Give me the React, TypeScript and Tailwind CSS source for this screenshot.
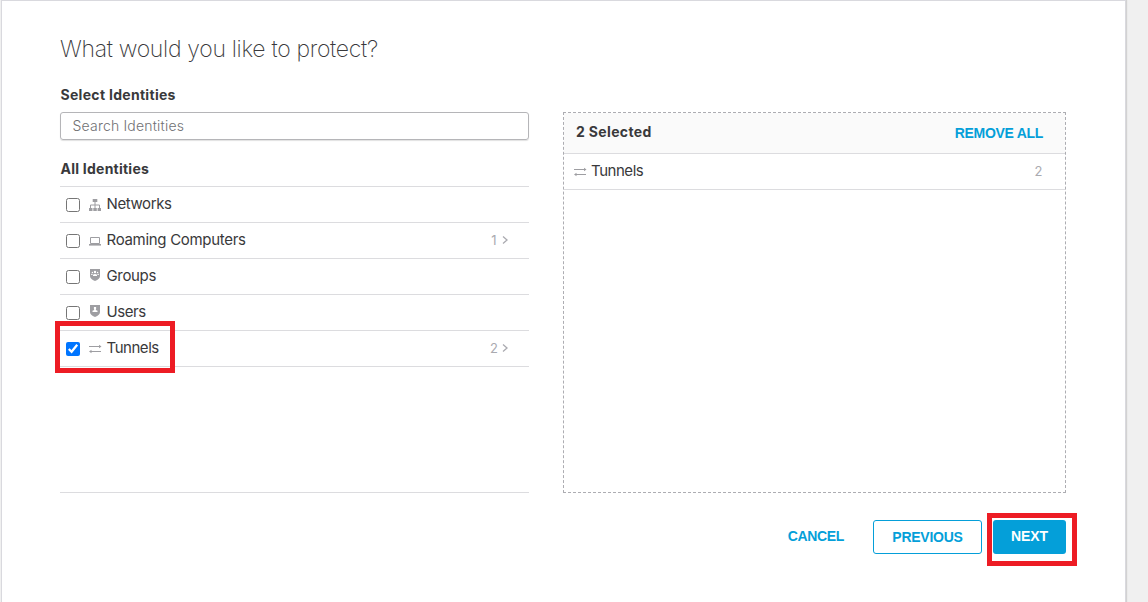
import { useState } from "react";

type IconName = "network" | "laptop" | "group" | "user" | "tunnel";

function Icon({ name }: { name: IconName }) {
  const common = {
    width: 14,
    height: 14,
    viewBox: "0 0 14 14",
    fill: "#9e9ea2",
    className: "block shrink-0",
  };
  switch (name) {
    case "network":
      return (
        <svg {...common}>
          <path d="M4.700 1h4.600v3H4.700zM1 10h3.500v3H1zM5.300 10h3.500v3H5.300zM9.600 10H13v3H9.600z" />
          <path d="M7 4v6M2.500 10V7h9v3" fill="none" stroke="#9e9ea2" />
        </svg>
      );
    case "laptop":
      return (
        <svg {...common}>
          <path d="M2.500 3.500h9v6h-9z" fill="none" stroke="#9e9ea2" />
          <path d="M1 10h12v1.600H1z" />
        </svg>
      );
    case "group":
      return (
        <svg {...common}>
          <path d="M2 1h10v7q0 3.200-5 5-5-1.800-5-5z" />
          <g fill="#fff">
            <circle cx="7" cy="4" r="1.200" />
            <path d="M5 8V6.700q2-1.400 4 0V8z" />
            <circle cx="4.400" cy="4.500" r=".7" />
            <circle cx="9.600" cy="4.500" r=".7" />
            <path d="M3.200 7V6q.7-.7 1.300 0v1zM9.500 7V6q.7-.7 1.300 0v1z" />
          </g>
        </svg>
      );
    case "user":
      return (
        <svg {...common}>
          <path d="M2 1h10v7q0 3.200-5 5-5-1.800-5-5z" />
          <path d="M5.900 3h2.200v2L7.700 6l1.800.7V8h-5V6.700L6.300 6l-.4-1z" fill="#fff" />
        </svg>
      );
    case "tunnel":
      return (
        <svg {...common}>
          <path d="M1 4h10V2.800L13.500 4.500 11 6.200V5H1zM13 9H3.500V7.800L1 9.500l2.500 1.700V10H13z" />
        </svg>
      );
  }
}

const identities: { label: string; icon: IconName; count?: number }[] = [
  { label: "Networks", icon: "network" },
  { label: "Roaming Computers", icon: "laptop", count: 1 },
  { label: "Groups", icon: "group" },
  { label: "Users", icon: "user" },
  { label: "Tunnels", icon: "tunnel", count: 2 },
];

const labelSpacing: Record<string, string> = {
  Networks: "tracking-[-0.4px]",
  "Roaming Computers": "tracking-[-0.3px]",
  Groups: "tracking-[-0.35px]",
  Users: "tracking-[-0.4px]",
  Tunnels: "tracking-[-0.45px]",
};

export default function App() {
  const [checked, setChecked] = useState<Record<string, boolean>>({ Tunnels: true });

  return (
    <div className="relative h-[602px] w-[1148px] overflow-hidden bg-[#f0f0f0] pl-px font-['Inter',sans-serif] text-[#39393b]">
      <main className="flex h-full w-[1125px] flex-col border-x border-t border-[#d9d9de] bg-white pl-[58px] shadow-[1px_0_1px_rgba(0,0,0,0.12)]">
        <h1 className="mt-[32px] h-[32px] whitespace-nowrap text-[23px] font-extralight leading-[32px] tracking-[-0.31px] text-[#39393b]">
          What would you like to protect?
        </h1>

        <div className="mt-[20px] flex gap-[34px]">
          <section className="flex h-[408px] w-[469px] flex-col border-b border-[#dcdcdf]">
            <h2 className="h-[20px] pl-[0.5px] text-[14px] font-bold leading-[20px] tracking-[0.3px]">Select Identities</h2>
            <input
              placeholder="Search Identities"
              className="mt-[7px] h-[28px] w-full shrink-0 rounded-[3px] border border-[#b5b5b8] pb-px pl-[11.5px] text-[14px] font-light tracking-[0.2px] shadow-[0_1px_1px_rgba(0,0,0,0.12)] outline-none placeholder:text-[#707073]"
            />
            <h2 className="mt-[19px] h-[27px] pl-[0.5px] text-[14px] font-bold leading-[20px] tracking-[0.24px]">All Identities</h2>
            <ul>
              {identities.map((item) => (
                <li
                  key={item.label}
                  className="flex h-[36px] items-center border-t border-[#dcdcdf] pl-[6px] last:h-[37px] last:border-b"
                >
                  <input
                    type="checkbox"
                    aria-label={item.label}
                    checked={!!checked[item.label]}
                    onChange={(e) => setChecked({ ...checked, [item.label]: e.target.checked })}
                    className="h-[14px] w-[14px] shrink-0"
                  />
                  <span
                    className={
                      item.icon === "group" || item.icon === "user"
                        ? "mb-[4px] ml-[8px]"
                        : "ml-[8px] mt-px"
                    }
                  >
                    <Icon name={item.icon} />
                  </span>
                  <span className={`ml-[4.5px] pb-px text-[15px] leading-[20px] ${labelSpacing[item.label]}`}>
                    {item.label}
                  </span>
                  {item.count && (
                    <span className="ml-auto mr-[21.5px] flex items-center gap-[3px] pb-px text-[13px] leading-[20px] text-[#aaaab0]">
                      <span className="w-[9px] text-center">{item.count}</span>
                      <svg width="6" height="8" viewBox="0 0 6 8" fill="none" stroke="#aaaab0" strokeWidth="1.3">
                        <path d="M1 .6 5 4 1 7.400" />
                      </svg>
                    </span>
                  )}
                </li>
              ))}
            </ul>
          </section>

          <section className="mt-[27px] h-[381px] w-[503px] border border-dashed border-[#adadb2]">
            <header className="flex h-[41px] items-center justify-between border-b border-[#dcdcdf] bg-[#fafafa] pl-[12px] pr-[22px]">
              <h2 className="pb-[2px] text-[14px] font-bold leading-[20px] tracking-[0.35px]">2 Selected</h2>
              <button className="whitespace-nowrap font-['Liberation_Sans',sans-serif] text-[14px] font-bold leading-[20px] tracking-[-0.3px] text-[#049fd9]">
                REMOVE ALL
              </button>
            </header>
            <div className="flex h-[36px] items-center border-b border-[#dcdcdf] pl-[9px] pr-[22.5px]">
              <Icon name="tunnel" />
              <span className="ml-[4px] pb-px text-[15px] leading-[20px] tracking-[-0.45px]">Tunnels</span>
              <span className="ml-auto pb-px text-[13px] leading-[20px] text-[#aaaab0]">2</span>
            </div>
          </section>
        </div>

        <footer className="mt-[27px] flex h-[34px] w-[1006px] justify-end font-['Liberation_Sans',sans-serif] text-[14px] font-bold text-[#049fd9]">
          <button className="mr-[29px] pb-px tracking-[-0.35px]">CANCEL</button>
          <button className="mr-[11px] w-[109px] rounded-[3px] border border-[#049fd9] tracking-[-0.25px]">PREVIOUS</button>
          <button className="w-[73px] rounded-[3px] bg-[#049fd9] pb-px tracking-[-0.1px] text-white">NEXT</button>
        </footer>
      </main>
      <div className="pointer-events-none absolute left-[55px] top-[321px] h-[52px] w-[120px] border-[5px] border-[#ed1c24]" />
      <div className="pointer-events-none absolute left-[987px] top-[513px] h-[53px] w-[90px] border-[5px] border-[#ed1c24]" />
    </div>
  );
}
